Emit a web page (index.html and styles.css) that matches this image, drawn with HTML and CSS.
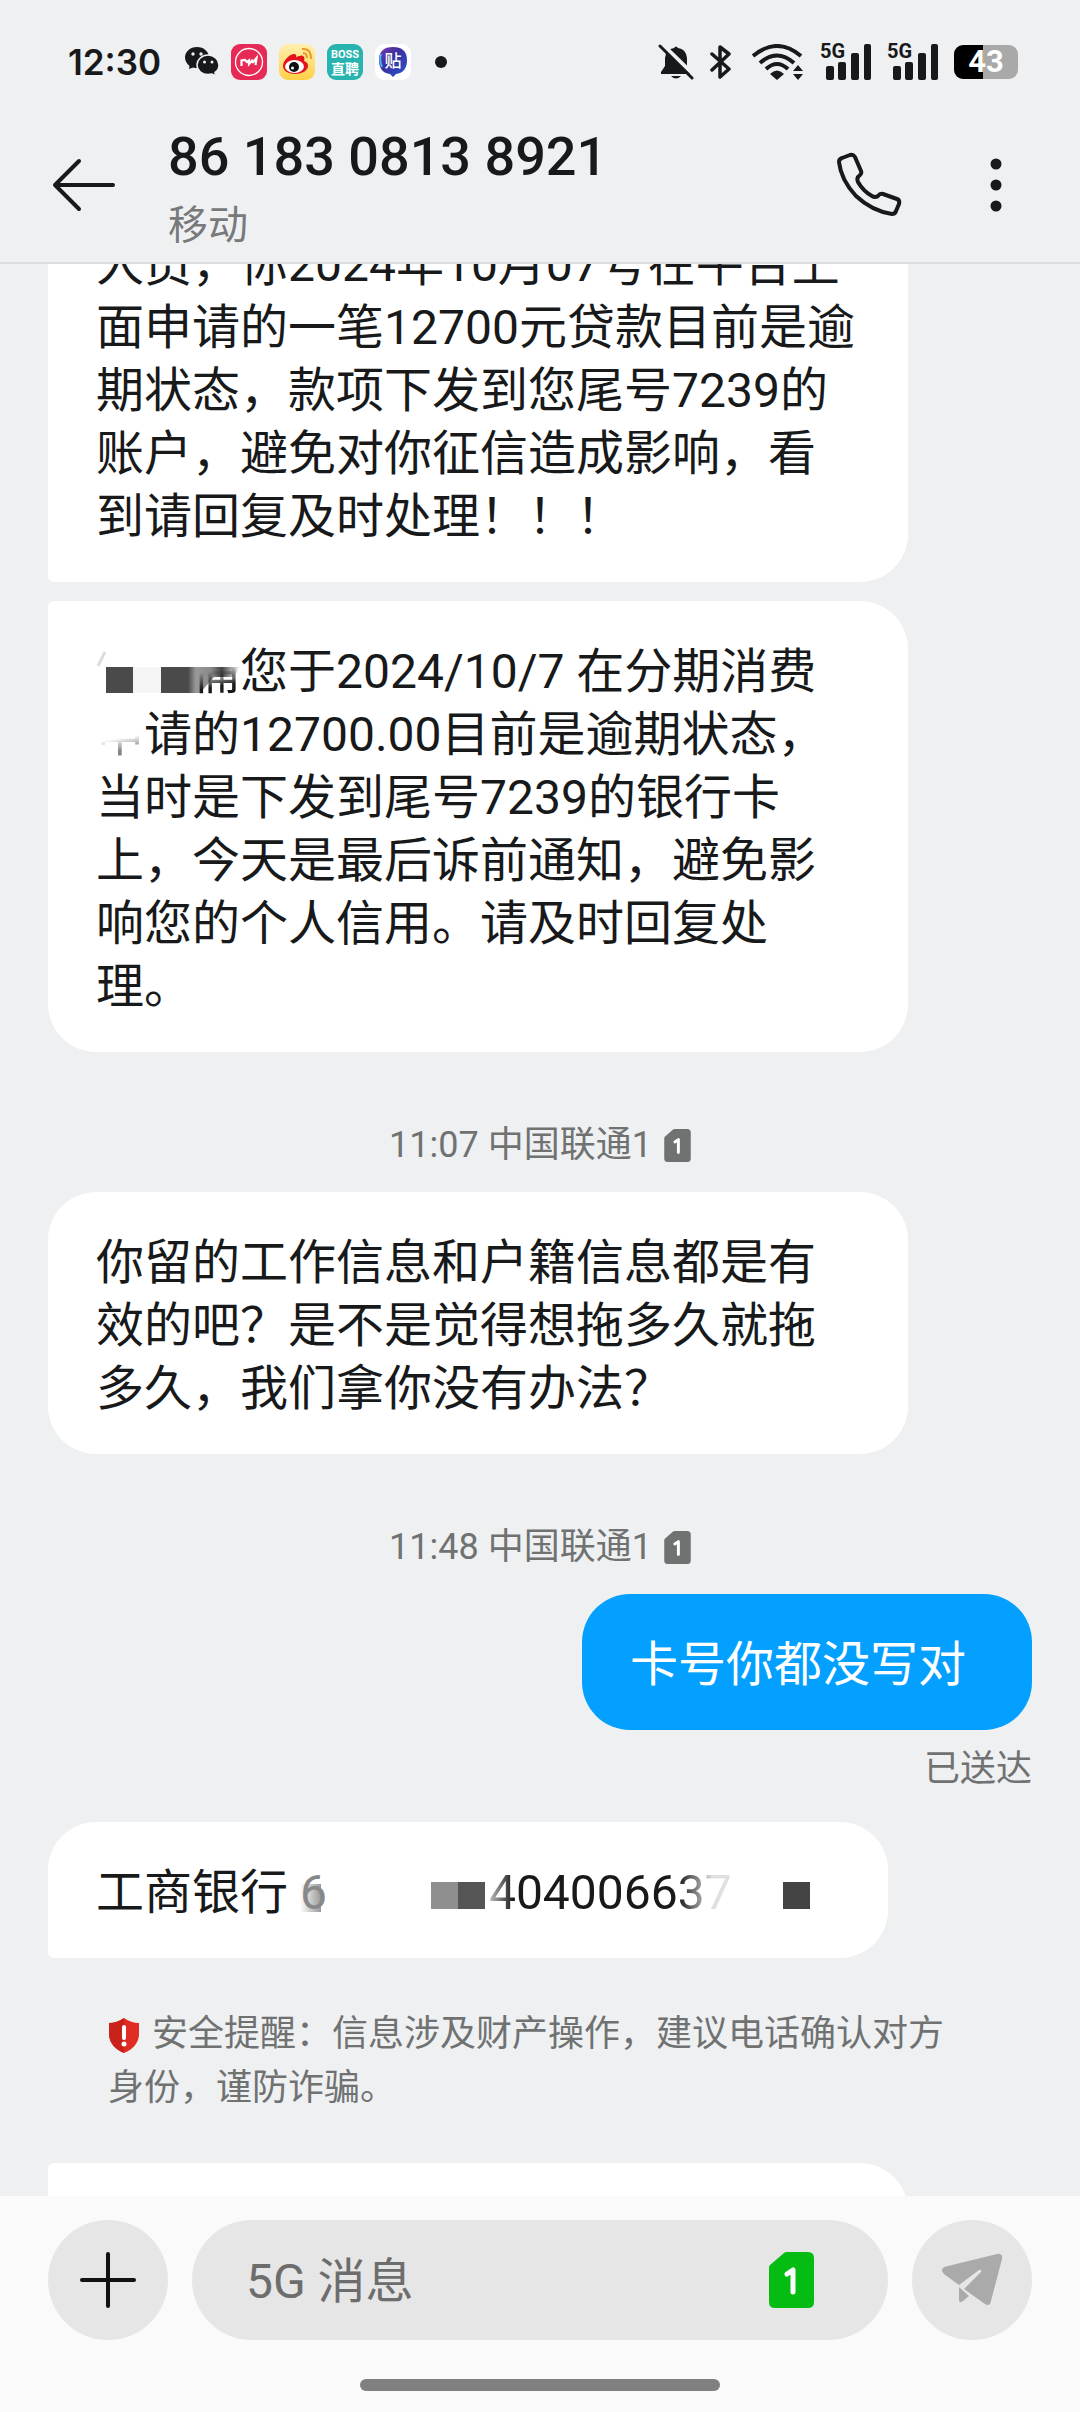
FILE: index.html
```html
<!DOCTYPE html>
<html lang="zh-CN">
<head>
<meta charset="utf-8">
<meta name="viewport" content="width=device-width, initial-scale=1">
<title>86 183 0813 8921</title>
<link rel="stylesheet" href="styles.css">
</head>
<body>
<svg class="defs" aria-hidden="true">
  <symbol id="sim" viewBox="0 0 45 56"><path d="M15 1Q16 0 18 0H39Q45 0 45 6V50Q45 56 39 56H6Q0 56 0 50V16Q0 14 1 13Z" fill="currentColor"/><path d="M18 22L24 18V40" fill="none" stroke="#fff" stroke-width="5" stroke-linejoin="round" stroke-linecap="round"/></symbol>
  <symbol id="signal" viewBox="0 0 51 38"><g fill="#17191a"><rect x="6" y="23" width="8" height="14" rx="2"/><rect x="18" y="19" width="8" height="18" rx="2"/><rect x="31" y="10" width="8" height="27" rx="2"/><rect x="44" y="1" width="7" height="36" rx="2"/></g></symbol>
</svg>

<header class="top">
  <div class="status">
    <time class="clock">12:30</time>
    <div class="apps">
      <svg width="34" height="30" viewBox="0 0 34 30"><path d="M12 0C5 0 0 5 0 10.500C0 14 2 17 4.500 19L4 22L8 20.500Q10 21 12 21C19 21 24 16 24 10.500S19 0 12 0Z" fill="#17191a"/><path d="M23 8C17 8 12 12.500 12 18S17 27.500 23 27.500Q25 27.500 27 27L30.500 29L30 25.500C32.500 24 34 21 34 18C34 12.500 29 8 23 8Z" fill="#17191a" stroke="#eff0f2" stroke-width="1.500"/><g fill="#eff0f2"><circle cx="8" cy="7" r="1.700"/><circle cx="16" cy="7" r="1.700"/><circle cx="19.500" cy="15" r="1.500"/><circle cx="27" cy="15" r="1.500"/></g></svg>
      <svg width="36" height="36" viewBox="0 0 36 36"><rect width="36" height="36" rx="9" fill="#e62a55"/><circle cx="18" cy="18" r="13.500" fill="none" stroke="#fff" stroke-width="1.300"/><path d="M10.500 22V16.500L14 16L16 18L18 16.500V20L21 16.500L22 18L25.500 14L24.500 21" fill="none" stroke="#fff" stroke-width="2.200"/></svg>
      <svg width="36" height="36" viewBox="0 0 36 36"><defs><linearGradient id="wb" x2="0" y2="1"><stop stop-color="#fff0b0"/><stop offset="1" stop-color="#ffd045"/></linearGradient></defs><rect width="36" height="36" rx="9" fill="url(#wb)"/><path d="M4 22C4 16 12 9 16 10Q18 11 17 13Q24 10 25 13Q26 15 25 17Q29 18 29 22C29 27 22 30 16 30S4 27 4 22Z" fill="#e3131b"/><ellipse cx="15.500" cy="22.500" rx="9.500" ry="6.500" fill="#fff"/><circle cx="15" cy="23" r="5" fill="#111"/><circle cx="13.500" cy="24" r="1.500" fill="#fff"/><path d="M23 5Q32 4 32 15M24 9Q28 9 28 14" fill="none" stroke="#eb9a20" stroke-width="2"/></svg>
      <span class="boss"><b>BOSS</b><i>直聘</i></span>
      <span class="tie"><svg width="28" height="30" viewBox="0 0 28 30"><defs><linearGradient id="tb" x2="1" y2="1"><stop stop-color="#7a3fb0"/><stop offset=".4" stop-color="#3d2f9c"/><stop offset="1" stop-color="#2257d6"/></linearGradient></defs><path d="M14 0C23 0 28 4 28 13S24 26 17 27L14 30L11 27C4 26 0 22 0 13S5 0 14 0Z" fill="url(#tb)"/><path d="M2 7Q0 13 3 20" fill="none" stroke="#39b9ff" stroke-width="2"/></svg><i>贴</i></span>
      <svg width="12" height="12" viewBox="0 0 12 12"><circle cx="6" cy="6" r="6" fill="#17191a"/></svg>
    </div>
    <div class="radios">
      <svg width="36" height="36" viewBox="0 0 36 36"><path d="M3 28L7 22V14Q8 5 16 4Q18 1 20 4Q28 5 29 14V22L33 28V30H3Z" fill="#17191a"/><path d="M13 32H23Q18 37 13 32Z" fill="#17191a"/><path d="M3 -1L38 33" stroke="#eff0f2" stroke-width="4"/><path d="M2 2L34 34" stroke="#17191a" stroke-width="3" stroke-linecap="round"/></svg>
      <svg width="22" height="36" viewBox="0 0 22 36"><path d="M2 10L19 25L10 33V3L19 10L2 26" fill="none" stroke="#17191a" stroke-width="3.500" stroke-linejoin="round" stroke-linecap="round"/></svg>
      <svg class="wifi" width="52" height="36" viewBox="0 0 52 36"><g fill="none" stroke="#17191a" stroke-width="4"><path d="M1 12Q25 -8 49 12"/><path d="M8 19Q25 4 42 19"/><path d="M14 25Q25 15 36 25"/></g><path d="M18 30Q25 23 32 30L25 36Z" fill="#17191a"/><path d="M41 27L46 21L51 27ZM41 30L46 36L51 30Z" fill="#17191a"/></svg>
      <span class="cell"><svg width="51" height="38"><use href="#signal"/></svg><b>5G</b></span>
      <span class="cell"><svg width="51" height="38"><use href="#signal"/></svg><b>5G</b></span>
      <span class="battery">43</span>
    </div>
  </div>
  <div class="bar">
    <button class="icon" aria-label="返回"><svg width="64" height="56" viewBox="0 0 64 56"><path d="M27 4L3 28L27 52M3 28H61" fill="none" stroke="#17191a" stroke-width="4" stroke-linecap="round" stroke-linejoin="round"/></svg></button>
    <div class="who">
      <h1>86 183 0813 8921</h1>
      <p>移动</p>
    </div>
    <button class="icon" aria-label="拨打电话"><svg width="68" height="68" viewBox="0 0 68 68"><path d="M6 7L14 4Q17 3 19 6L25 20Q26 22 24 24Q20 27 22 31Q27 40 36 45Q39 47 42 45Q44 42 47 43L61 48Q64 49 63 53L60 60Q59 63 56 63Q36 60 20 45Q5 29 3 11Q3 8 6 7Z" fill="none" stroke="#17191a" stroke-width="4" stroke-linejoin="round"/></svg></button>
    <button class="icon" aria-label="更多"><svg width="12" height="56" viewBox="0 0 12 56"><g fill="#17191a"><circle cx="6" cy="7" r="5.500"/><circle cx="6" cy="28" r="5.500"/><circle cx="6" cy="49" r="5.500"/></g></svg></button>
  </div>
</header>

<main class="chat">
  <div class="thread">
    <p class="bubble tight-bottom">人员，你2024年10月07号在平台上面申请的一笔12700元贷款目前是逾期状态，款项下发到您尾号7239的账户，避免对你征信造成影响，看到请回复及时处理！！！</p>
    <p class="bubble tight-top"><span class="hidden-name"><svg width="144" height="48" viewBox="0 0 144 48"><defs><linearGradient id="sm"><stop stop-color="#4a4a4a"/><stop offset=".15" stop-color="#999"/><stop offset=".45" stop-color="#888"/><stop offset=".65" stop-color="#444"/><stop offset="1" stop-color="#fff"/></linearGradient></defs><path d="M2 17L9 3" stroke="#ddd" stroke-width="3"/><rect x="10" y="18" width="27" height="26" fill="#4a4a4a"/><rect x="37" y="18" width="28" height="26" fill="#f5f5f5"/><rect x="65" y="18" width="27" height="26" fill="#4a4a4a"/><path d="M92 18H144L138 28H118L104 44H92Z" fill="url(#sm)"/></svg><i>俑</i></span>您于2024/10/7 在分期消费<span class="smudged">申</span>请的12700.00目前是逾期状态，当时是下发到尾号7239的银行卡上，今天是最后诉前通知，避免影响您的个人信用。请及时回复处理。</p>

    <p class="stamp">11:07 中国联通1 <svg width="27" height="33"><use href="#sim"/></svg></p>
    <p class="bubble">你留的工作信息和户籍信息都是有效的吧？是不是觉得想拖多久就拖多久，我们拿你没有办法？</p>

    <p class="stamp">11:48 中国联通1 <svg width="27" height="33"><use href="#sim"/></svg></p>
    <p class="bubble sent">卡号你都没写对</p>
    <p class="delivered">已送达</p>

    <p class="bubble card tight-bottom">工商银行 <span class="digit-start">6</span><span class="blocks"></span><span class="digits">404006637</span><span class="block-end"></span></p>
    <p class="notice"><svg width="32" height="36" viewBox="0 0 32 36"><path d="M16 0Q23 5 31 5V17Q30 29 16 35Q2 29 1 17V5Q9 5 16 0Z" fill="#e02c22"/><path d="M16 0V35Q2 29 1 17V5Q9 5 16 0Z" fill="#c8231a"/><path d="M16 9V20" stroke="#fff" stroke-width="4" stroke-linecap="round"/><circle cx="16" cy="26" r="2.500" fill="#fff"/></svg> 安全提醒：信息涉及财产操作，建议电话确认对方身份，谨防诈骗。</p>
    <div class="bubble tight-top next"></div>
  </div>
</main>

<footer class="composer">
  <form class="row">
    <button type="button" class="round" aria-label="添加"><svg width="56" height="56" viewBox="0 0 56 56"><path d="M28 2V54M2 28H54" stroke="#111" stroke-width="4" stroke-linecap="round"/></svg></button>
    <div class="field">
      <input type="text" aria-label="消息内容" placeholder="5G 消息">
      <button type="button" class="sim" aria-label="SIM 卡 1"><svg width="45" height="56"><use href="#sim"/></svg></button>
    </div>
    <button type="button" class="round" aria-label="发送"><svg width="62" height="54" viewBox="0 0 62 54"><path d="M3 14Q-1 17 3 21L18 32L38 17Q41 16 40 19L23 36L44 51Q49 54 50 48L61 6Q62 0 56 1Z" fill="#aaa"/><path d="M18 34V46Q18 51 22 48L28 43Z" fill="#aaa"/></svg></button>
  </form>
  <div class="home"></div>
</footer>
</body>
</html>
```
FILE: styles.css
```css
* { box-sizing: border-box; }

body {
  margin: 0;
  height: 100vh;
  display: flex;
  flex-direction: column;
  background: #eff0f2;
  color: #17191a;
  font-family: Roboto, "Noto Sans CJK SC", sans-serif;
  text-spacing-trim: space-all;
  text-autospace: no-autospace;
}

h1, p { margin: 0; font-weight: 400; }
i { font-style: normal; }
svg { display: block; flex: none; }
button { border: 0; padding: 0; background: none; color: inherit; display: flex; align-items: center; justify-content: center; }
.defs { position: absolute; width: 0; height: 0; }

/* Header */
.top { flex: none; border-bottom: 2px solid #dcdddf; }
.status { display: flex; align-items: center; height: 124px; padding: 0 62px 0 68px; }
.clock { font: 600 35px/48px Inter, sans-serif; width: 117px; }
.apps { display: flex; align-items: center; gap: 12px; }
.apps > :last-child { margin-left: 12px; }
.boss {
  display: flex; flex-direction: column; align-items: center; justify-content: center;
  width: 36px; height: 36px; border-radius: 9px; background: #27b3b0; color: #fff;
}
.boss b { font: 700 11px/13px Roboto, sans-serif; }
.boss i { font-size: 14px; line-height: 16px; font-weight: 700; }
.tie {
  position: relative; display: flex; align-items: center; justify-content: center;
  width: 36px; height: 36px; border-radius: 9px; background: #fff;
}
.tie i { position: absolute; inset: 0; color: #fff; font-size: 17px; line-height: 34px; text-align: center; font-weight: 500; }

.radios { display: flex; align-items: center; gap: 16px; margin-left: auto; }
.wifi { margin-left: 4px; }
.cell { position: relative; }
.cell b { position: absolute; left: 0; top: 0; font: 700 20px/16px Roboto, sans-serif; }
.battery {
  width: 64px; height: 34px; border-radius: 9px; color: #fff;
  background: linear-gradient(90deg, #000 45%, #a9a9a9 45%);
  font: 700 31px/34px Roboto, sans-serif; text-align: center;
}

.bar { display: flex; align-items: center; height: 138px; padding: 0 78px 16px 52px; }
.icon { flex: none; }
.who { flex: 1; padding: 6px 0 0 52px; }
.who h1 { font-size: 54px; line-height: 64px; font-weight: 500; }
.who p { margin-top: 12px; font-size: 40px; line-height: 50px; color: #77797a; }
.bar .icon:last-child { margin-left: 86px; }

/* Conversation */
.chat { flex: 1; min-height: 0; overflow: hidden; }
.thread { display: flex; flex-direction: column; align-items: flex-start; padding: 0 48px; margin-top: -70px; }
.bubble {
  max-width: 860px; padding: 39px 48px 34px;
  border-radius: 48px; background: #fff;
  font-size: 48px; line-height: 63px;
}
.tight-bottom { border-bottom-left-radius: 6px; }
.tight-top { border-top-left-radius: 6px; }
.bubble.tight-bottom + .bubble { margin-top: 19px; }

.stamp {
  align-self: center; display: flex; align-items: center; gap: 12px;
  margin: 66px 0 20px; font-size: 36px; line-height: 54px; color: #707272;
}
.sent { align-self: flex-end; padding-right: 66px; background: #03a0ff; color: #fff; }
.delivered { align-self: flex-end; margin: 12px 0 26px; font-size: 36px; line-height: 54px; color: #707272; }

/* Smeared-out parts of a message */
.hidden-name { position: relative; display: inline-block; height: 48px; width: 144px; vertical-align: -9px; }
.hidden-name i { position: absolute; right: 0; top: 0; line-height: 48px; -webkit-mask-image: linear-gradient(170deg, transparent 45%, #000 75%); mask-image: linear-gradient(170deg, transparent 45%, #000 75%); }
.smudged { -webkit-mask-image: linear-gradient(170deg, transparent 55%, #0008 75%); mask-image: linear-gradient(170deg, transparent 55%, #0008 75%); }
.card { width: 840px; max-width: 100%; }
.digit-start { background: linear-gradient(90deg, #fff, #999) no-repeat 0 20px / 21px 28px; color: #888; }
.blocks, .block-end { display: inline-block; width: 162px; height: 27px; }
.blocks { background: linear-gradient(90deg, #8f8f8f 50%, #555 50%) no-repeat 104px 0 / 54px 27px; }
.digits { -webkit-mask-image: linear-gradient(90deg, #0004, #000 10%, #000 78%, #0002 92%); mask-image: linear-gradient(90deg, #0004, #000 10%, #000 78%, #0002 92%); }
.block-end { width: 80px; background: linear-gradient(#444, #444) no-repeat 51px 0 / 27px 27px; }

.notice { padding: 0 60px; margin: 49px 0 48px; font-size: 36px; line-height: 54px; color: #707272; }
.notice svg { display: inline-block; vertical-align: -8px; margin-right: 3px; }
.next { width: 860px; min-height: 136px; }

/* Composer */
.composer { flex: none; background: #fafafa; padding: 24px 48px 21px; }
.row { display: flex; gap: 24px; }
.round { flex: none; width: 120px; height: 120px; border-radius: 60px; background: #e6e6e6; }
.field { flex: 1; min-width: 0; display: flex; align-items: center; height: 120px; padding: 0 74px 0 54px; border-radius: 60px; background: #e6e6e6; }
.field input { flex: 1; min-width: 0; border: 0; padding: 3px 0 0; outline: 0; background: none; font: inherit; font-size: 48px; line-height: 63px; }
.field input::placeholder { color: #6d6d6d; opacity: 1; }
.sim { color: #05bd12; }
.home { width: 360px; height: 12px; margin: 39px auto 0; border-radius: 6px; background: #808080; }
```
